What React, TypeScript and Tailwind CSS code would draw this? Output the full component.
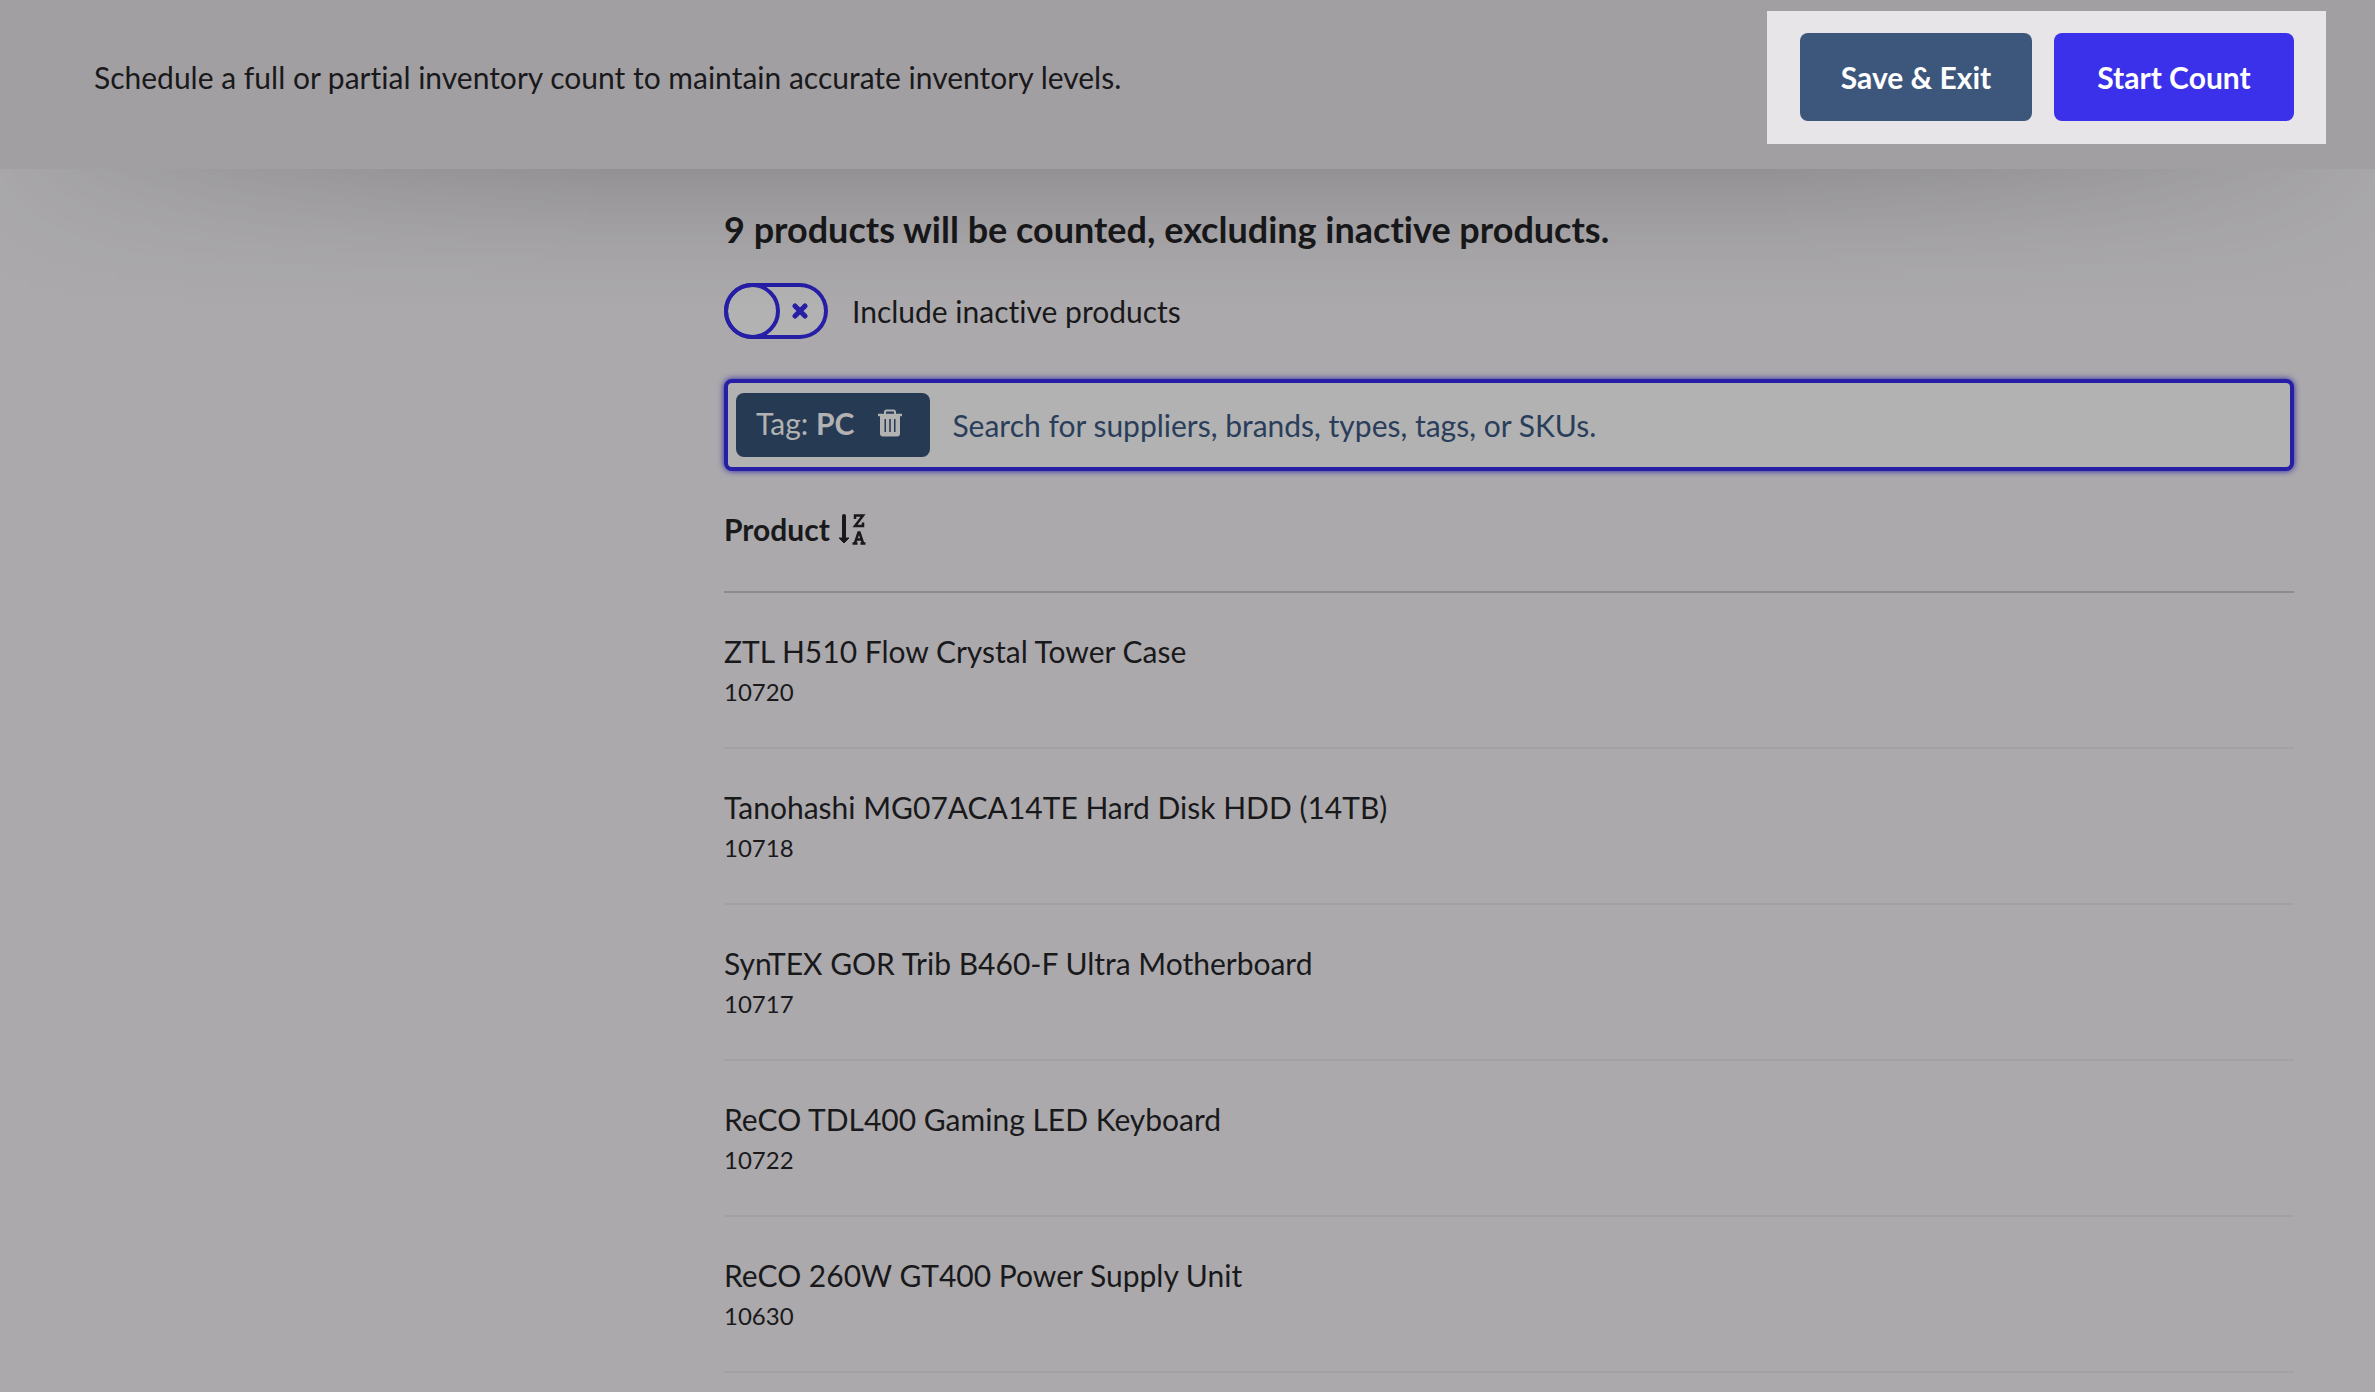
import React, { useState } from 'react';

interface Product {
  name: string;
  sku: string;
}

const products: Product[] = [
  { name: 'ZTL H510 Flow Crystal Tower Case', sku: '10720' },
  { name: 'Tanohashi MG07ACA14TE Hard Disk HDD (14TB)', sku: '10718' },
  { name: 'SynTEX GOR Trib B460-F Ultra Motherboard', sku: '10717' },
  { name: 'ReCO TDL400 Gaming LED Keyboard', sku: '10722' },
  { name: 'ReCO 260W GT400 Power Supply Unit', sku: '10630' }
];

const SortIcon: React.FC = () => (
  <svg viewBox="0 0 28 32" className="w-7 h-8" fill="none" stroke="currentColor" aria-hidden="true">
    <path d="M6 3v24" strokeWidth="4" strokeLinecap="round" />
    <path d="M1 25h10l-5 5z" fill="currentColor" strokeWidth="1" strokeLinejoin="round" />
    <path d="M17 6V2.5h8L17 13h8V9.500" strokeWidth="2.5" />
    <path d="M14.500 30.500h5M22.500 30.500h5M17 30l3.500-10.500h1L25 30M18 26.500h6" strokeWidth="2.5" />
  </svg>
);

const TrashIcon: React.FC = () => (
  <svg viewBox="0 0 24 28" className="w-6 h-7" fill="none" stroke="currentColor" aria-hidden="true">
    <path d="M7 5.500V3q0-1.500 1.500-1.500h7Q17 1.500 17 3v2.500" strokeWidth="2" />
    <path d="M0 6h24" strokeWidth="2.5" />
    <path
      fill="currentColor"
      stroke="none"
      fillRule="evenodd"
      d="M2 6h20v18.500a3 3 0 0 1-3 3H5a3 3 0 0 1-3-3zM6.500 10v13H8V10zM11.200 10v13h1.600V10zM16 10v13h1.500V10z"
    />
  </svg>
);

const CrossIcon: React.FC = () => (
  <svg viewBox="0 0 16 16" className="size-4" stroke="currentColor" aria-hidden="true">
    <path d="M3 3l10 10M13 3L3 13" strokeWidth="5" strokeLinecap="round" />
  </svg>
);

const Toggle: React.FC<{ label: string }> = ({ label }) => {
  const [checked, setChecked] = useState(false);

  return (
    <label className="flex items-center gap-6 w-fit cursor-pointer">
      <input
        type="checkbox"
        checked={checked}
        onChange={(e) => setChecked(e.target.checked)}
        className="sr-only"
      />
      <span
        className={`flex items-center w-[104px] h-14 rounded-full bg-[#b2b2b2] ring-4 ring-inset ring-[#261ea5] text-[#261ea5] ${
          checked ? 'flex-row-reverse' : ''
        }`}
      >
        <span className="size-14 rounded-full border-4 border-[#261ea5]" />
        <span className="flex flex-1 justify-center pr-2">
          <CrossIcon />
        </span>
      </span>
      <span>{label}</span>
    </label>
  );
};

// Soft shadow under the header that fades out towards both window edges
const HeaderShadow: React.FC = () => (
  <div className="absolute inset-x-0 top-full h-[140px] pointer-events-none bg-[linear-gradient(rgba(0,0,0,0.14),rgba(0,0,0,0.1)_24px,rgba(0,0,0,0.05)_64px,rgba(0,0,0,0.015)_104px,transparent)] [mask-image:linear-gradient(90deg,rgba(0,0,0,0.1),rgba(0,0,0,0.38)_5%,rgba(0,0,0,0.6)_10%,rgba(0,0,0,0.82)_17%,#000_26%,#000_74%,rgba(0,0,0,0.82)_83%,rgba(0,0,0,0.6)_90%,rgba(0,0,0,0.38)_95%,rgba(0,0,0,0.1))]" />
);

export default function App() {
  const [query, setQuery] = useState('');

  return (
    <div className="min-h-screen overflow-hidden bg-[#aba9ac] font-['Lato',sans-serif] [font-variant-ligatures:none] text-[30px] leading-10 text-[#19191b]">
      {/* Header */}
      <header className="relative flex justify-between items-start pl-[94px] pr-[49px] pt-[11px] pb-[25px] bg-[#a29fa2]">
        <p className="pt-[46px]">
          Schedule a full or partial inventory count to maintain accurate inventory levels.
        </p>
        <div className="flex gap-[22px] pt-[22px] pb-[23px] pl-[33px] pr-8 bg-[#e7e5e8] font-bold text-white">
          <button type="button" className="w-[232px] h-[88px] rounded-lg bg-[#3d577c]">
            Save &amp; Exit
          </button>
          <button type="button" className="w-[240px] h-[88px] rounded-lg bg-[#3c31eb]">
            Start Count
          </button>
        </div>
        <HeaderShadow />
      </header>

      <main className="ml-[724px] mr-[81px] pt-9">
        <h1 className="text-4xl leading-[48px] font-bold">
          9 products will be counted, excluding inactive products.
        </h1>

        <div className="mt-[30px]">
          <Toggle label="Include inactive products" />
        </div>

        {/* Filter box */}
        <div className="flex items-center gap-[22px] h-[92px] mt-10 px-2 border-4 border-[#261ea5] rounded-lg bg-[#b2b2b2] shadow-[0_0_6px_#261ea5]">
          <div className="flex items-center h-16 pl-5 pr-7 pb-1 rounded-lg bg-[#273a54] text-[#b2b2b2]">
            <span>
              Tag: <b>PC</b>
            </span>
            <button type="button" aria-label="Remove tag" className="ml-6">
              <TrashIcon />
            </button>
          </div>
          <input
            type="text"
            value={query}
            onChange={(e) => setQuery(e.target.value)}
            aria-label="Search products"
            placeholder="Search for suppliers, brands, types, tags, or SKUs."
            className="flex-1 min-w-0 bg-transparent outline-none placeholder:text-[#2a3e5b]"
          />
        </div>

        {/* Product list */}
        <table className="w-full mt-6 text-left">
          <thead>
            <tr className="border-b-2 border-[#8d8b8f]">
              <th className="h-[97px] pb-7 font-bold">
                <button type="button" className="flex items-center gap-2">
                  Product
                  <SortIcon />
                </button>
              </th>
            </tr>
          </thead>
          <tbody>
            {products.map((product) => (
              <tr key={product.sku} className="border-b-2 border-[#a3a1a4]">
                <td className="h-[156px] pt-1">
                  <p>{product.name}</p>
                  <p className="text-2xl leading-[42px]">{product.sku}</p>
                </td>
              </tr>
            ))}
          </tbody>
        </table>
      </main>
    </div>
  );
}
